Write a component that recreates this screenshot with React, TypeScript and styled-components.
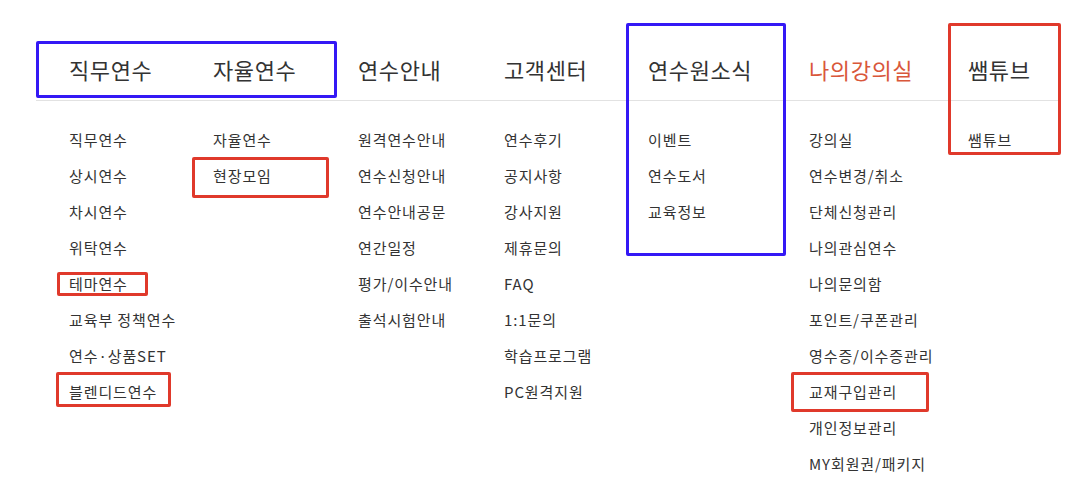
import React from 'react';
import styled, { createGlobalStyle } from 'styled-components';

const GlobalStyle = createGlobalStyle`
  html, body {
    margin: 0;
    padding: 0;
    background: #fff;
  }
  body {
    font-family: "Noto Sans CJK KR", "Noto Sans", sans-serif;
    color: #333;
  }
  ul {
    margin: 0;
    padding: 0;
    list-style: none;
  }
`;

interface MenuGroup {
  title: string;
  active?: boolean;
  items: string[];
}

const menus: MenuGroup[] = [
  {
    title: '직무연수',
    items: ['직무연수', '상시연수', '차시연수', '위탁연수', '테마연수', '교육부 정책연수', '연수·상품SET', '블렌디드연수'],
  },
  { title: '자율연수', items: ['자율연수', '현장모임'] },
  {
    title: '연수안내',
    items: ['원격연수안내', '연수신청안내', '연수안내공문', '연간일정', '평가/이수안내', '출석시험안내'],
  },
  {
    title: '고객센터',
    items: ['연수후기', '공지사항', '강사지원', '제휴문의', 'FAQ', '1:1문의', '학습프로그램', 'PC원격지원'],
  },
  { title: '연수원소식', items: ['이벤트', '연수도서', '교육정보'] },
  {
    title: '나의강의실',
    active: true,
    items: [
      '강의실',
      '연수변경/취소',
      '단체신청관리',
      '나의관심연수',
      '나의문의함',
      '포인트/쿠폰관리',
      '영수증/이수증관리',
      '교재구입관리',
      '개인정보관리',
      'MY회원권/패키지',
    ],
  },
  { title: '쌤튜브', items: ['쌤튜브'] },
];

const COLUMNS = '144px 145px 146px 144px 161px 159px 1fr';

const Stage = styled.div`
  position: relative;
  width: 1084px;
  height: 480px;
  overflow: hidden;
`;

const Menu = styled.nav`
  margin-left: 36px;
  width: 1024px;
`;

const TitleRow = styled.div`
  display: grid;
  grid-template-columns: ${COLUMNS};
  padding: 54px 0 16px 33px;
  border-bottom: 1px solid #e2e2e2;
`;

const Title = styled.a<{ $active?: boolean }>`
  font-size: 22px;
  line-height: 30px;
  font-weight: 400;
  letter-spacing: 0.6px;
  color: ${(p) => (p.$active ? '#d9573a' : '#333')};
  white-space: nowrap;
`;

const ListRow = styled.div`
  display: grid;
  grid-template-columns: ${COLUMNS};
  padding: 21px 0 0 33px;
`;

const Item = styled.li`
  font-size: 15px;
  line-height: 36px;
  letter-spacing: 0.9px;
  color: #333;
  white-space: nowrap;
`;

const Mark = styled.div<{ $color: 'blue' | 'red' }>`
  position: absolute;
  box-sizing: border-box;
  border: 3px solid ${(p) => (p.$color === 'blue' ? '#3418f5' : '#e0392b')};
  border-radius: 2px;
  pointer-events: none;
`;

const marks: { color: 'blue' | 'red'; x: number; y: number; w: number; h: number }[] = [
  { color: 'blue', x: 36, y: 41, w: 301, h: 57 },
  { color: 'blue', x: 626, y: 23, w: 160, h: 233 },
  { color: 'red', x: 948, y: 23, w: 113, h: 132 },
  { color: 'red', x: 192, y: 157, w: 137, h: 41 },
  { color: 'red', x: 57, y: 272, w: 91, h: 24 },
  { color: 'red', x: 56, y: 372, w: 115, h: 35 },
  { color: 'red', x: 791, y: 372, w: 138, h: 40 },
];

const App: React.FC = () => {
  return (
    <>
      <GlobalStyle />
      <Stage>
        <Menu>
          <TitleRow>
            {menus.map((m) => (
              <Title key={m.title} $active={m.active}>
                {m.title}
              </Title>
            ))}
          </TitleRow>
          <ListRow>
            {menus.map((m) => (
              <ul key={m.title}>
                {m.items.map((it) => (
                  <Item key={it}>{it}</Item>
                ))}
              </ul>
            ))}
          </ListRow>
        </Menu>
        {marks.map((k, i) => (
          <Mark
            key={i}
            $color={k.color}
            style={{ left: k.x, top: k.y, width: k.w, height: k.h }}
          />
        ))}
      </Stage>
    </>
  );
};

export default App;
